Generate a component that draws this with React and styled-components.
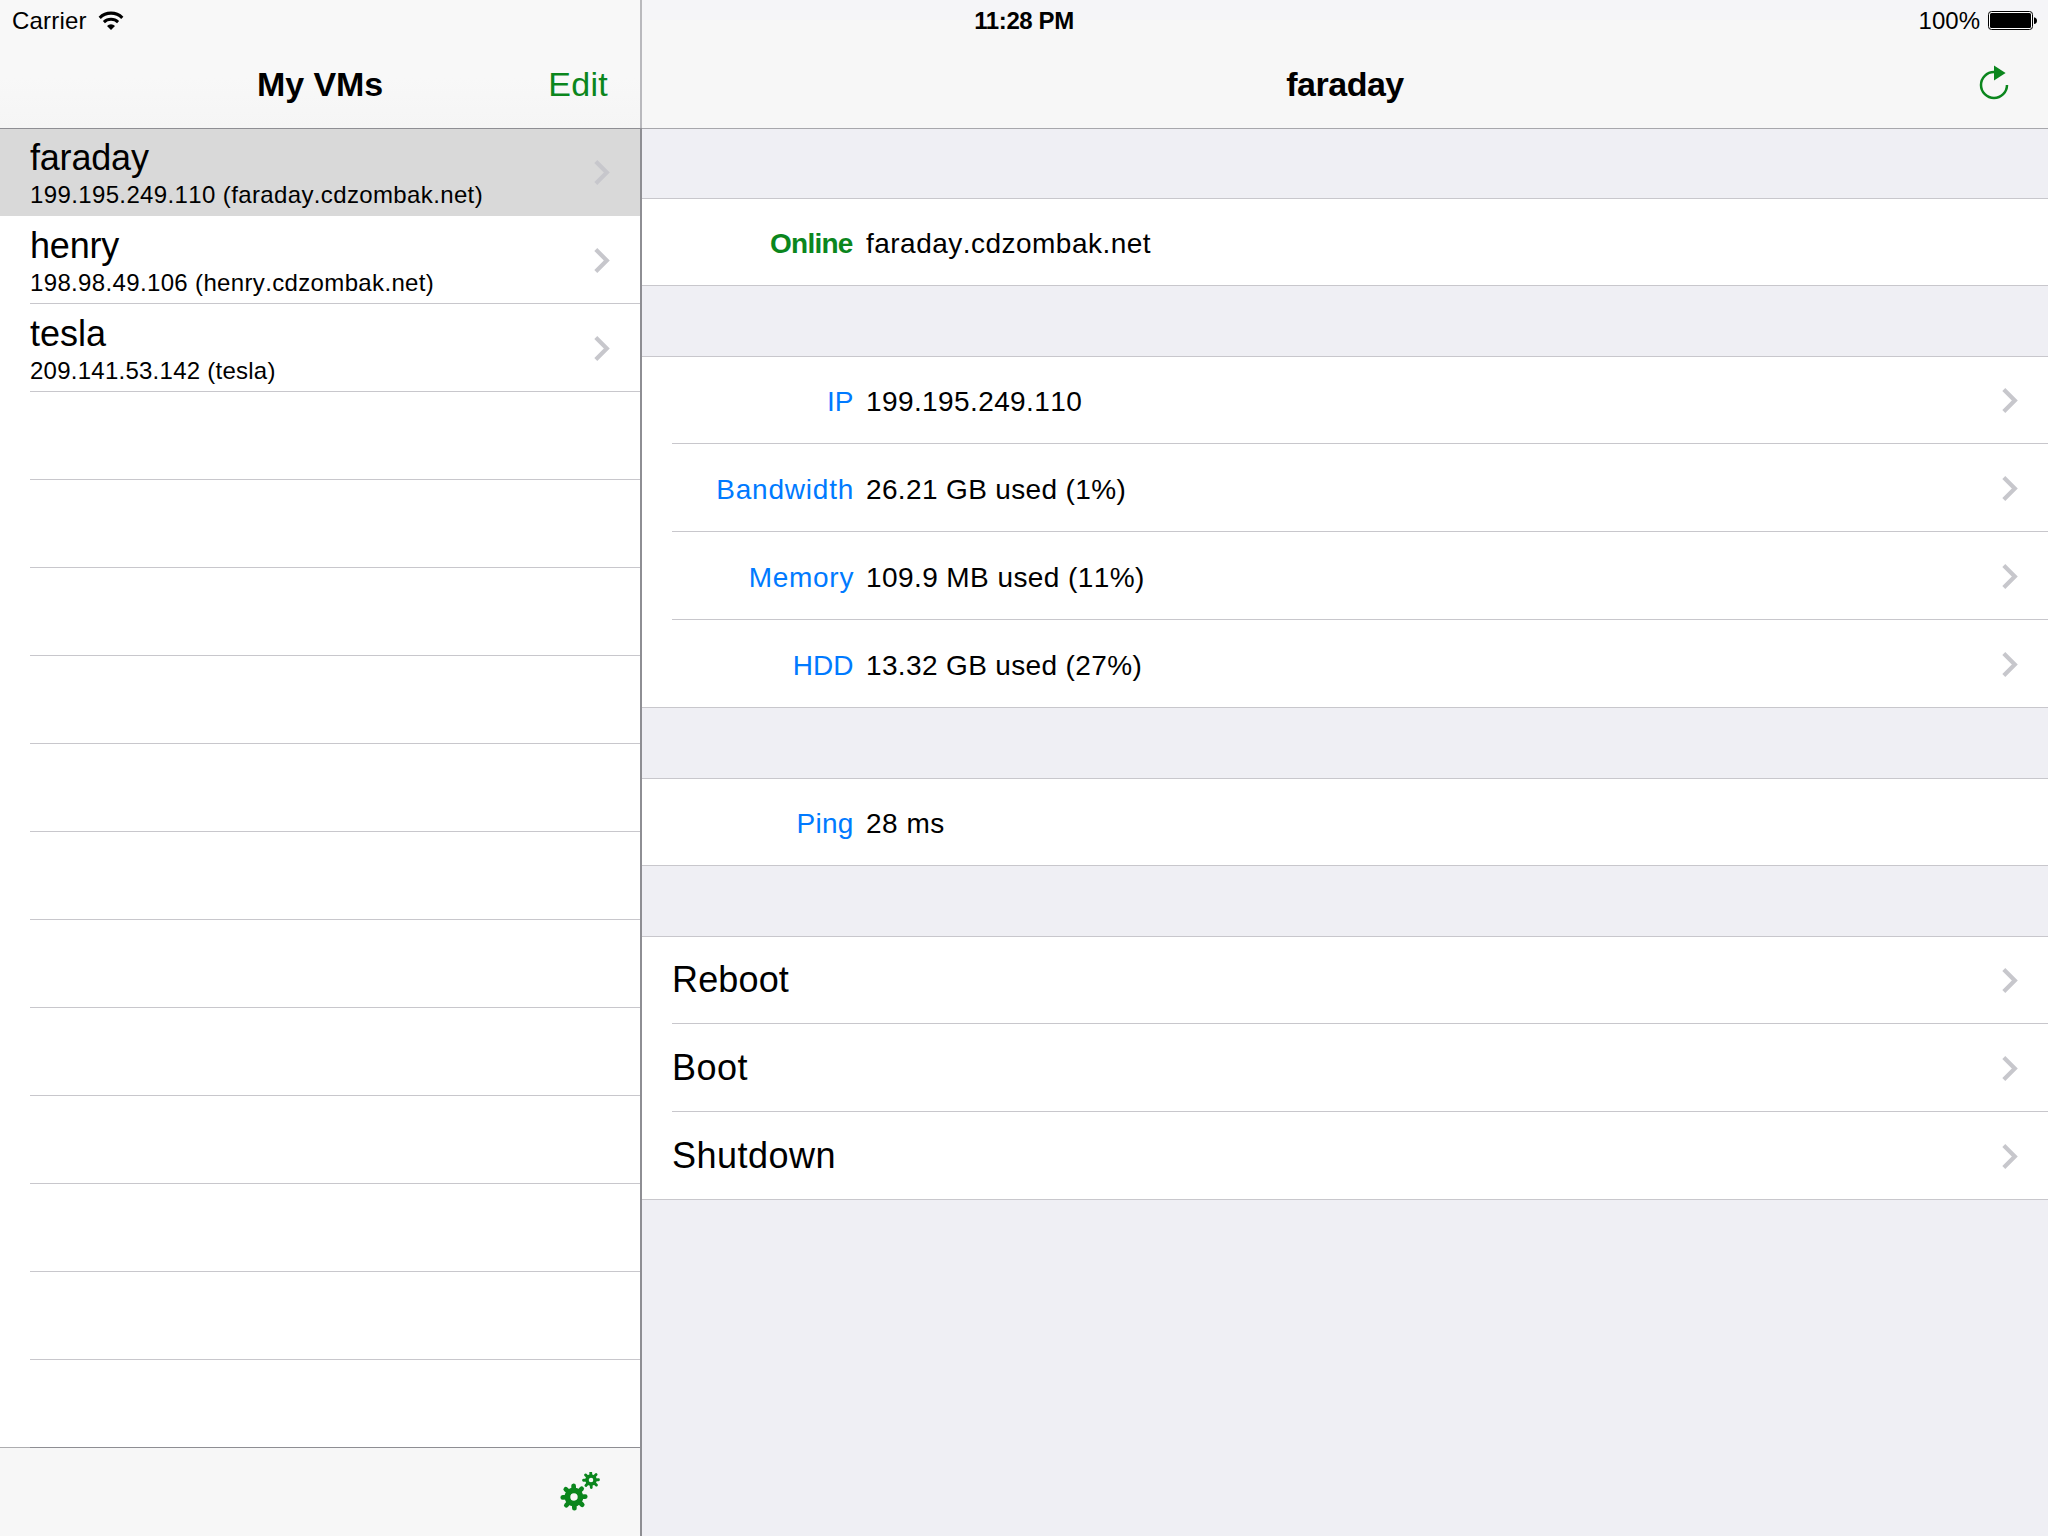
import React from "react";
import styled, { createGlobalStyle } from "styled-components";

const GREEN = "#0b861d";
const HAIRLINE = "#c8c7cc";

const GlobalStyle = createGlobalStyle`
  *, *::before, *::after { box-sizing: border-box; }
  body {
    margin: 0;
    background: #efeff4;
    color: #000;
    font-family: "Liberation Sans", Arial, Helvetica, sans-serif;
    font-kerning: none;
  }
`;

const Screen = styled.main`
  display: grid;
  grid-template-columns: 640px 2px 1fr;
  grid-template-rows: 1536px;
  width: 2048px;
  height: 1536px;
  overflow: hidden;
  position: relative;
`;

const Pane = styled.section`
  display: flex;
  flex-direction: column;
  min-width: 0;
  min-height: 0;
  background: ${(p) => p.$bg};
`;

const Divider = styled.div`
  background: linear-gradient(#b9b9bd 128px, #8e8e93 128px);
`;

const NavBar = styled.header`
  display: grid;
  grid-template-columns: 1fr auto 1fr;
  align-items: center;
  flex: none;
  height: 129px;
  padding: 40px ${(p) => p.$inset}px 0;
  background: ${(p) => p.$bg};
  border-bottom: 1px solid ${(p) => p.$line};
`;

const Title = styled.h1`
  grid-column: 2;
  margin: 0;
  font-size: 34px;
  font-weight: 700;
  line-height: 40px;
  letter-spacing: ${(p) => p.$track}px;
`;

const EditButton = styled.button`
  grid-column: 3;
  justify-self: end;
  padding: 0;
  border: 0;
  background: none;
  color: ${GREEN};
  font: 34px/40px "Liberation Sans", Arial, sans-serif;
  letter-spacing: 0.3px;
`;

const IconButton = styled.button`
  grid-column: 3;
  justify-self: end;
  display: flex;
  padding: 0 0 ${(p) => p.$lift || 0}px;
  border: 0;
  background: none;
`;

const StatusBar = styled.div`
  position: absolute;
  inset: 0 0 auto 0;
  display: grid;
  grid-template-columns: 1fr auto 1fr;
  align-items: center;
  height: 40px;
  padding: 1px 11px 0 12px;
  font-size: 24px;
  line-height: 40px;
`;

const StatusGroup = styled.div`
  display: flex;
  align-items: center;
  justify-content: ${(p) => (p.$end ? "flex-end" : "flex-start")};
  gap: ${(p) => p.$gap}px;
  letter-spacing: ${(p) => p.$track}px;
`;

const Clock = styled.time`
  font-weight: 700;
  font-kerning: normal;
  padding-right: 1px;
  letter-spacing: -0.4px;
`;

const List = styled.ul`
  flex: 1;
  margin: -1px 0 0;
  padding: 1px 0 0;
  list-style: none;
  overflow: hidden;
`;

const VmRow = styled.li`
  display: flex;
  align-items: center;
  height: 88px;
  padding: 0 30px;
  background: linear-gradient(${HAIRLINE}, ${HAIRLINE}) 30px 87px / 100% 1px no-repeat #fff;

  &:first-child {
    height: 87px;
    padding-bottom: 1px;
    background-position: 30px 86px;
  }

  &[aria-selected="true"] {
    background: #d9d9d9;
  }
`;

const VmText = styled.div`
  flex: 1;
  display: flex;
  flex-direction: column;
  padding-top: 4px;
`;

const VmName = styled.span`
  font-size: 36px;
  line-height: 41px;
  letter-spacing: ${(p) => p.$track}px;
`;

const VmAddress = styled.span`
  font-size: 24px;
  line-height: 33px;
  letter-spacing: ${(p) => p.$track}px;
`;

const Toolbar = styled.footer`
  display: flex;
  align-items: center;
  justify-content: flex-end;
  flex: none;
  height: 89px;
  padding: 1px 40px 0 0;
  background: linear-gradient(90deg, #adadb0 30px, #8e8e93 30px) 0 0 / 100% 1px no-repeat #f7f7f7;
`;

const Groups = styled.div`
  display: flex;
  flex-direction: column;
  gap: 70px;
  padding-top: 69px;
`;

const Group = styled.div`
  background: #fff;
  border-top: 1px solid ${HAIRLINE};
  border-bottom: 1px solid ${HAIRLINE};
`;

const Cell = styled.div`
  display: flex;
  align-items: center;
  height: 88px;
  margin-left: 30px;
  padding: 1px 30px 0 0;
  border-bottom: 1px solid ${HAIRLINE};

  &:first-child { height: 87px; padding-top: 0; }
  &:last-child { height: 87px; border-bottom: 0; }
  &:only-child { height: 86px; }
`;

const Label = styled.span`
  width: ${(p) => 181.4 + p.$track}px;
  margin-right: ${(p) => 12.6 - p.$track}px;
  padding-top: 3px;
  text-align: right;
  font-size: 28px;
  line-height: 37px;
  font-weight: ${(p) => (p.$strong ? 700 : 400)};
  color: ${(p) => (p.$strong ? GREEN : "#007aff")};
  letter-spacing: ${(p) => p.$track}px;
`;

const Value = styled.span`
  flex: 1;
  padding-top: 3px;
  font-size: 28px;
  line-height: 37px;
  letter-spacing: ${(p) => p.$track}px;
`;

const Action = styled.span`
  flex: 1;
  font-size: 36px;
  line-height: 44px;
  letter-spacing: ${(p) => p.$track}px;
`;

const Chevron = () => (
  <svg width="16" height="26" viewBox="0 0 16 26" fill="none">
    <path d="M1.8 2.5 12.8 13.5 1.8 24.5" stroke="#c7c7cc" strokeWidth="4.2" />
  </svg>
);

const WifiIcon = () => (
  <svg width="26" height="20" viewBox="0 0 26 20" fill="none" stroke="#000">
    <path d="M1.7 6.8a16.2 16.2 0 0 1 22.6 0" strokeWidth="3.2" />
    <path d="M5.9 11.2a10.3 10.3 0 0 1 14.2 0" strokeWidth="3" />
    <path d="M13 19 9 15a5.7 5.7 0 0 1 8 0z" fill="#000" stroke="none" />
  </svg>
);

const BatteryIcon = () => (
  <svg width="49" height="20" viewBox="0 0 49 20">
    <rect x="0.5" y="0.5" width="44" height="18" rx="3" fill="#fff" stroke="#000" />
    <rect x="2" y="2" width="41" height="15" rx="1.5" />
    <path d="M46 6.3q3 .6 3 3.4t-3 3.4z" />
  </svg>
);

const RefreshIcon = () => (
  <svg width="30" height="36" viewBox="0 0 30 36">
    <path d="M28 20A13 13 0 1 1 15 7" fill="none" stroke={GREEN} strokeWidth="2.5" />
    <path d="M15 0.6 26.6 8 15 15.4z" fill={GREEN} />
  </svg>
);

const Gear = ({ cx, cy, body, hole, reach, tooth }) => (
  <g transform={`translate(${cx} ${cy}) rotate(-2)`} stroke={GREEN} fill="none">
    <circle r={(body + hole) / 2} strokeWidth={body - hole} />
    {[0, 45, 90, 135, 180, 225, 270, 315].map((angle) => (
      <path
        key={angle}
        d={`M0 ${-(hole + tooth / 2 + 0.5)}V${-(reach - tooth / 2)}`}
        strokeWidth={tooth}
        strokeLinecap="round"
        transform={`rotate(${angle})`}
      />
    ))}
  </g>
);

const GearsIcon = () => (
  <svg width="40" height="40" viewBox="0 0 40 40">
    <Gear cx={14} cy={25} body={9.4} hole={3.7} reach={13.6} tooth={4.7} />
    <Gear cx={31} cy={8} body={5.8} hole={2.3} reach={8.9} tooth={2.8} />
  </svg>
);

const vms = [
  { name: "faraday", track: -0.2, address: "199.195.249.110 (faraday.cdzombak.net)", addressTrack: 0.37, selected: true },
  { name: "henry", track: -0.2, address: "198.98.49.106 (henry.cdzombak.net)", addressTrack: 0.35 },
  { name: "tesla", track: 0, address: "209.141.53.142 (tesla)", addressTrack: 0.25 },
];

const usage = [
  { label: "IP", track: 0, value: "199.195.249.110", valueTrack: 0.4 },
  { label: "Bandwidth", track: 0.8, value: "26.21 GB used (1%)", valueTrack: 0.36 },
  { label: "Memory", track: 0.7, value: "109.9 MB used (11%)", valueTrack: 0.42 },
  { label: "HDD", track: 0, value: "13.32 GB used (27%)", valueTrack: 0.36 },
];

const actions = [
  { name: "Reboot", track: 0.15 },
  { name: "Boot", track: 0.5 },
  { name: "Shutdown", track: 0.5 },
];

export default function App() {
  return (
    <>
      <GlobalStyle />
      <Screen>
        <Pane $bg="#fff">
          <NavBar $inset={32} $bg="linear-gradient(#f8f8f8 60%, #f5f5f5)" $line="#8e8e93">
            <Title $track={-0.1}>My VMs</Title>
            <EditButton>Edit</EditButton>
          </NavBar>
          <List>
            {vms.map((vm) => (
              <VmRow key={vm.name} aria-selected={Boolean(vm.selected)}>
                <VmText>
                  <VmName $track={vm.track}>{vm.name}</VmName>
                  <VmAddress $track={vm.addressTrack}>{vm.address}</VmAddress>
                </VmText>
                <Chevron />
              </VmRow>
            ))}
            {Array.from({ length: 12 }, (_, i) => (
              <VmRow key={i} />
            ))}
          </List>
          <Toolbar>
            <IconButton><GearsIcon /></IconButton>
          </Toolbar>
        </Pane>
        <Divider />
        <Pane $bg="#efeff4">
          <NavBar $inset={39} $bg="linear-gradient(#f5f5f8 20px, #f7f7f7 20px)" $line="#a7a7ac">
            <Title $track={-0.5}>faraday</Title>
            <IconButton $lift={3}><RefreshIcon /></IconButton>
          </NavBar>
          <Groups>
            <Group>
              <Cell>
                <Label $strong $track={-0.75}>Online</Label>
                <Value $track={0.48}>faraday.cdzombak.net</Value>
              </Cell>
            </Group>
            <Group>
              {usage.map((row) => (
                <Cell key={row.label}>
                  <Label $track={row.track}>{row.label}</Label>
                  <Value $track={row.valueTrack}>{row.value}</Value>
                  <Chevron />
                </Cell>
              ))}
            </Group>
            <Group>
              <Cell>
                <Label $track={0.3}>Ping</Label>
                <Value $track={0.5}>28 ms</Value>
              </Cell>
            </Group>
            <Group>
              {actions.map((action) => (
                <Cell key={action.name}>
                  <Action $track={action.track}>{action.name}</Action>
                  <Chevron />
                </Cell>
              ))}
            </Group>
          </Groups>
        </Pane>
        <StatusBar>
          <StatusGroup $gap={11} $track={0.2}>
            <span>Carrier</span>
            <WifiIcon />
          </StatusGroup>
          <Clock>11:28 PM</Clock>
          <StatusGroup $end $gap={8} $track={0}>
            <span>100%</span>
            <BatteryIcon />
          </StatusGroup>
        </StatusBar>
      </Screen>
    </>
  );
}
